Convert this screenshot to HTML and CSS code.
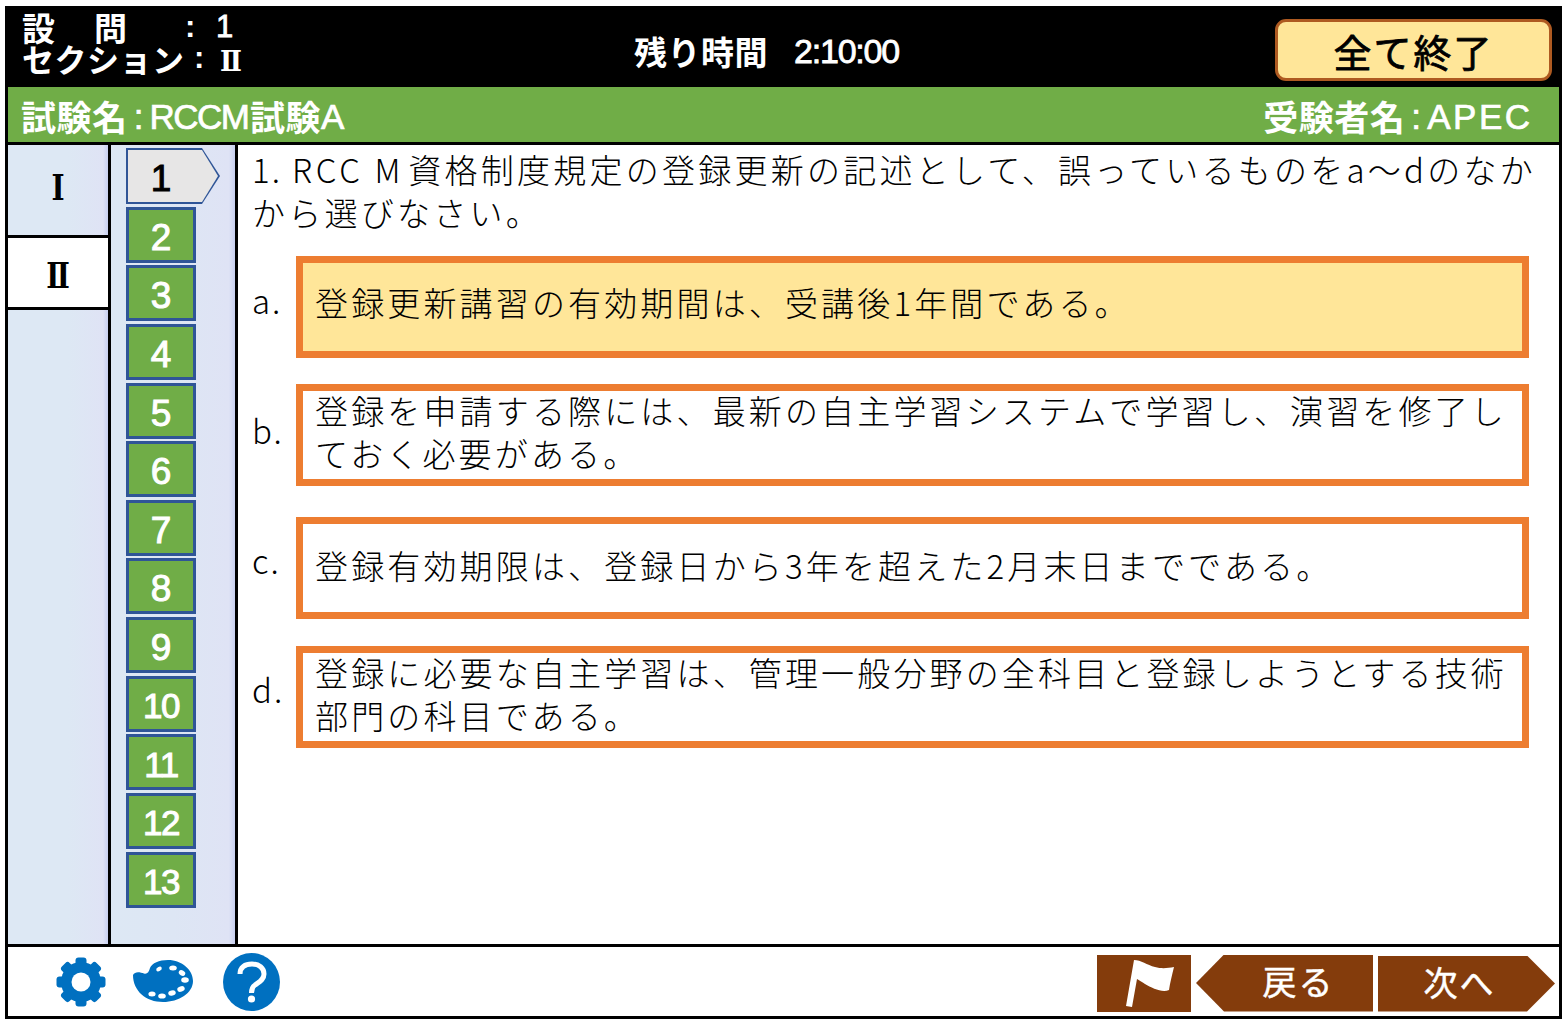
FILE: index.html
```html
<!DOCTYPE html>
<html lang="ja">
<head>
    <meta charset="UTF-8">
    <meta name="viewport" content="width=device-width, initial-scale=1.0">
    <title>RCCM試験</title>
    <link rel="stylesheet" href="styles.css">
</head>

<body>
    <div class="frame">
        <header class="top-bar">
            <div class="status">
                <div class="status-row"><span class="status-name status-name-wide">設　問</span><span class="status-colon">:</span><span class="status-value">1</span></div>
                <div class="status-row"><span class="status-name status-name-long">セクション</span><span class="status-colon status-colon-short">:</span><span class="status-roman roman">Ⅱ</span></div>
            </div>
            <div class="timer"><span class="timer-label">残り時間</span><span class="timer-value">2:10:00</span></div>
            <button class="finish-button">全て終了</button>
        </header>

        <div class="info-bar">
            <div>試験名<span class="info-latin info-colon">:</span><span class="info-latin info-tight">RCCM</span>試験<span class="info-latin">A</span></div>
            <div>受験者名<span class="info-latin info-colon">:</span><span class="info-latin info-wide">APEC</span></div>
        </div>

        <main class="main">
            <nav class="sections">
                <div class="section-tab"><span class="roman tab-glyph">Ⅰ</span></div>
                <div class="section-tab section-tab-active"><span class="roman tab-glyph">Ⅱ</span></div>
            </nav>

            <nav class="questions">
                <div class="q-current">1</div>
                <div class="q-item">2</div>
                <div class="q-item">3</div>
                <div class="q-item">4</div>
                <div class="q-item">5</div>
                <div class="q-item">6</div>
                <div class="q-item">7</div>
                <div class="q-item">8</div>
                <div class="q-item">9</div>
                <div class="q-item q-narrow">10</div>
                <div class="q-item q-narrow">11</div>
                <div class="q-item q-narrow">12</div>
                <div class="q-item q-narrow">13</div>
            </nav>

            <section class="content">
                <p class="question"><span class="question-no">1.</span><span class="question-code">RCC M</span>資格制度規定の登録更新の記述として、誤っているものをa～dのなか<br>から選びなさい。</p>

                <div class="option option-a">
                    <span class="option-label">a.</span>
                    <div class="option-box option-selected">登録更新講習の有効期間は、受講後1年間である。</div>
                </div>
                <div class="option option-b">
                    <span class="option-label">b.</span>
                    <div class="option-box"><div class="option-text">登録を申請する際には、最新の自主学習システムで学習し、演習を修了し<br>ておく必要がある。</div></div>
                </div>
                <div class="option option-c">
                    <span class="option-label">c.</span>
                    <div class="option-box">登録有効期限は、登録日から3年を超えた2月末日までである。</div>
                </div>
                <div class="option option-d">
                    <span class="option-label">d.</span>
                    <div class="option-box"><div class="option-text">登録に必要な自主学習は、管理一般分野の全科目と登録しようとする技術<br>部門の科目である。</div></div>
                </div>
            </section>
        </main>

        <footer class="bottom-bar">
            <div class="tools">
                <svg class="icon-gear" width="50" height="50" viewBox="0 0 50 50">
                    <g fill="#0070c0">
                        <circle cx="25" cy="25" r="20"/>
                        <rect x="19.500" y="0.500" width="11" height="49" rx="3"/>
                        <rect x="19.500" y="0.500" width="11" height="49" rx="3" transform="rotate(45 25 25)"/>
                        <rect x="19.500" y="0.500" width="11" height="49" rx="3" transform="rotate(90 25 25)"/>
                        <rect x="19.500" y="0.500" width="11" height="49" rx="3" transform="rotate(135 25 25)"/>
                    </g>
                    <circle cx="25" cy="25" r="9.500" fill="#fff"/>
                </svg>
                <svg class="icon-palette" width="62" height="43" viewBox="0 0 62 43">
                    <path fill="#0070c0" d="M1 15 C3 11 8 12 12 13.500 C15 14.500 17 12 18 8 C20 3 27 0 36 0 C50 0 61 10 61 21 C61 33 47 42 31 42 C14 42 1 31 1 15 Z"/>
                    <g fill="#fff">
                        <ellipse cx="27" cy="9" rx="3" ry="2" transform="rotate(-30 27 9)"/>
                        <ellipse cx="41" cy="8" rx="3.800" ry="2.500"/>
                        <ellipse cx="50" cy="13" rx="3.400" ry="2.600" transform="rotate(30 50 13)"/>
                        <ellipse cx="53" cy="20" rx="3.800" ry="2.800"/>
                        <ellipse cx="49" cy="29" rx="3.800" ry="2.600" transform="rotate(-20 49 29)"/>
                        <ellipse cx="40" cy="33" rx="3.800" ry="2.600" transform="rotate(-15 40 33)"/>
                        <ellipse cx="30" cy="36" rx="3.800" ry="2.600"/>
                        <ellipse cx="20" cy="34" rx="3.600" ry="2.500"/>
                    </g>
                </svg>
                <svg class="icon-help" width="57" height="58" viewBox="0 0 57 58">
                    <ellipse cx="28.500" cy="29" rx="28.500" ry="29" fill="#0070c0"/>
                    <path fill="none" stroke="#fff" stroke-width="5" d="M17 21 C17 14 22 11 29 11 C36 11 41 15 41 21 C41 27 36 29 32 32 C29 34 28.500 36 28.500 40"/>
                    <circle cx="28.500" cy="46" r="3.600" fill="#fff"/>
                </svg>
            </div>
            <div class="actions">
                <button class="flag-button">
                    <svg width="94" height="57" viewBox="0 0 94 57">
                        <path fill="#fff" d="M37 5 C44 5 50 10 58 12 C65 14 71 13 77 12 C75 20 73 28 72 35 C65 38 55 33 48 29 C45 27 42 25 40 24 L35 52 L29 51 Z"/>
                    </svg>
                </button>
                <button class="back-button">戻る</button>
                <button class="next-button">次へ</button>
            </div>
        </footer>
    </div>
</body>

</html>
```

FILE: styles.css
```css
* {
    box-sizing: border-box;
}

body {
    margin: 0;
    padding: 6px 4px 3px 5px;
    height: 1022px;
    background-color: #fff;
    font-family: "Noto Sans CJK JP", sans-serif;
    overflow: hidden;
}

.frame {
    height: 100%;
    border: 3px solid #000;
    border-top: none;
    display: flex;
    flex-direction: column;
}

.roman {
    font-family: "DejaVu Serif", serif;
    font-weight: 700;
}

/* top */

.top-bar {
    height: 81px;
    background-color: #000;
    color: #fff;
    display: flex;
    align-items: center;
    flex-shrink: 0;
}

.status {
    width: 626px;
    padding-left: 14px;
    font-size: 33px;
    font-weight: 700;
    line-height: 34px;
    margin-top: -9px;
}

.status-row {
    display: flex;
}

.status-row:first-child {
    padding-top: 3px;
    margin-bottom: -3px;
}

.status-name {
    width: 163px;
}

.status-name-wide {
    letter-spacing: 3px;
}

.status-name-long {
    font-size: 32px;
    width: 172px;
    letter-spacing: 0.500px;
}

.status-colon {
    width: 31px;
    font-family: "Liberation Sans", sans-serif;
    font-size: 31px;
}

.status-colon-short {
    width: 26px;
}

.status-value {
    font-family: "Liberation Sans", sans-serif;
    font-weight: 400;
    -webkit-text-stroke: 0.800px #fff;
    font-size: 31px;
}

.status-roman {
    font-size: 26px;
    padding-top: 3px;
    transform: scaleY(1.100);
}

.timer {
    display: flex;
    align-items: center;
    gap: 26px;
    font-size: 33px;
    font-weight: 700;
    letter-spacing: 0.500px;
    width: 641px;
    margin-top: 9px;
}

.timer-value {
    font-family: "Liberation Sans", sans-serif;
    font-weight: 400;
    -webkit-text-stroke: 0.800px #fff;
    letter-spacing: -1.200px;
    font-size: 34px;
}

.finish-button {
    width: 277px;
    height: 62px;
    margin-top: 7px;
    background-color: #ffe699;
    border: 3px solid #ae5a21;
    border-radius: 11px;
    color: #000;
    font-family: "Noto Sans CJK JP", sans-serif;
    font-size: 38px;
    font-weight: 400;
    -webkit-text-stroke: 0.800px #000;
    letter-spacing: 2px;
    padding: 0;
}

.info-bar {
    height: 55px;
    background-color: #70ad47;
    color: #fff;
    display: flex;
    justify-content: space-between;
    align-items: center;
    padding: 1px 29px 0 13px;
    font-size: 35px;
    font-weight: 700;
    letter-spacing: 0.500px;
    flex-shrink: 0;
}

.info-bar > div {
    display: flex;
    align-items: center;
}

.info-latin {
    font-family: "Liberation Sans", sans-serif;
    font-weight: 400;
    font-size: 35px;
    letter-spacing: 0;
    -webkit-text-stroke: 0.700px #fff;
    padding-top: 3px;
}

.info-tight {
    letter-spacing: -1.500px;
    margin-right: 1.500px;
}

.info-wide {
    letter-spacing: 2.500px;
    margin-right: -2.500px;
}

.info-colon {
    width: 22px;
    text-align: center;
}

/* middle */

.main {
    flex: 1;
    display: flex;
    border-top: 3px solid #000;
    border-bottom: 3px solid #000;
    min-height: 0;
}

.sections {
    width: 103px;
    border-right: 3px solid #000;
    background: linear-gradient(to right, #dde8f4 0%, #dde8f4 60%, #dfe3f5 95%, #c8d0f0 100%);
    flex-shrink: 0;
}

.section-tab {
    height: 90px;
    display: flex;
    align-items: center;
    justify-content: center;
    font-size: 28px;
    padding-bottom: 4px;
    color: #000;
}

.tab-glyph {
    transform: scaleY(1.250);
}

.section-tab-active {
    height: 75px;
    background-color: #fff;
    border-top: 3px solid #000;
    border-bottom: 3px solid #000;
    padding: 8px 0 0 0;
}

.questions {
    width: 127px;
    border-right: 3px solid #000;
    background: linear-gradient(to right, #dde8f4 0%, #dde6f4 50%, #dfe3f5 95%, #c8d0f0 100%);
    padding: 3px 0 0 15px;
    display: flex;
    flex-direction: column;
    gap: 2.640px;
    flex-shrink: 0;
}

.q-item {
    width: 70px;
    height: 56px;
    padding-top: 6px;
    background-color: #70ad47;
    border: 3px solid #2f5597;
    color: #fff;
    font-family: "Liberation Sans", sans-serif;
    font-size: 37px;
    font-weight: 400;
    -webkit-text-stroke: 1px #fff;
    display: flex;
    align-items: center;
    justify-content: center;
}

.q-narrow {
    letter-spacing: -1.500px;
    font-size: 35px;
    padding-top: 5px;
}

.q-current {
    width: 94px;
    height: 56px;
    background-color: #2f5597;
    clip-path: polygon(0 0, 76px 0, 100% 50%, 76px 100%, 0 100%);
    color: #000;
    font-family: "Liberation Sans", sans-serif;
    font-size: 37px;
    font-weight: 400;
    -webkit-text-stroke: 1px #000;
    padding: 5px 24px 0 0;
    display: flex;
    align-items: center;
    justify-content: center;
    position: relative;
    z-index: 0;
}

.q-current::before {
    content: "";
    position: absolute;
    inset: 2px;
    background-color: #e7e6e6;
    clip-path: polygon(0 0, 74px 0, 100% 50%, 74px 100%, 0 100%);
    z-index: -1;
}

.content {
    flex: 1;
    min-width: 0;
    background-color: #fff;
    padding: 3px 30px 0 14px;
    color: #000;
    font-size: 33px;
    font-weight: 300;
    line-height: 43px;
    letter-spacing: 3.150px;
}

.question {
    margin: 0 0 22px 0;
    letter-spacing: 3.250px;
    white-space: nowrap;
}

.question-no {
    letter-spacing: 2px;
    margin-right: 10px;
}

.question-code {
    letter-spacing: 3.700px;
    margin-right: 4px;
}

.option {
    display: flex;
    align-items: center;
}

.option-b {
    margin-top: 26px;
}

.option-c {
    margin-top: 31px;
}

.option-d {
    margin-top: 27px;
}

.option-label {
    width: 44px;
    flex-shrink: 0;
    margin-top: -15px;
    letter-spacing: 2px;
}

.option-a .option-label {
    margin-top: -13px;
}

.option-b .option-label {
    margin-top: -9px;
}

.option-box {
    flex: 1;
    min-width: 0;
    height: 102px;
    border: 7px solid #ed7d31;
    padding: 0 0 0 12px;
    white-space: nowrap;
}

.option-text {
    margin-top: -2px;
}

.option-selected {
    background-color: #ffe699;
    padding-top: 18px;
}

.option-c .option-box {
    padding-top: 20px;
}

/* bottom */

.bottom-bar {
    height: 69px;
    display: flex;
    justify-content: space-between;
    align-items: center;
    flex-shrink: 0;
    background-color: #fff;
}

.tools {
    display: flex;
    align-items: center;
    padding-left: 48px;
}

.icon-gear {
    margin-right: 26px;
}

.icon-palette {
    margin-right: 29px;
    margin-top: -1px;
}

.actions {
    display: flex;
    align-items: center;
    gap: 5px;
    padding: 3px 4px 0 0;
}

.actions button {
    height: 57px;
    border: none;
    padding: 0 0 5px 0;
    background-color: #843c0c;
    color: #fff;
    font-family: "Noto Sans CJK JP", sans-serif;
    font-size: 34px;
    font-weight: 400;
    -webkit-text-stroke: 0.500px #fff;
    letter-spacing: 2px;
}

.actions .flag-button {
    width: 94px;
    padding: 0;
}

.flag-button svg {
    display: block;
}

.actions .back-button {
    width: 177px;
    clip-path: polygon(28px 0, 100% 0, 100% 100%, 28px 100%, 0 50%);
    padding-left: 28px;
}

.actions .next-button {
    width: 177px;
    height: 56px;
    margin-top: 1px;
    clip-path: polygon(0 0, 149px 0, 100% 50%, 149px 100%, 0 100%);
    padding-right: 14px;
}
```
